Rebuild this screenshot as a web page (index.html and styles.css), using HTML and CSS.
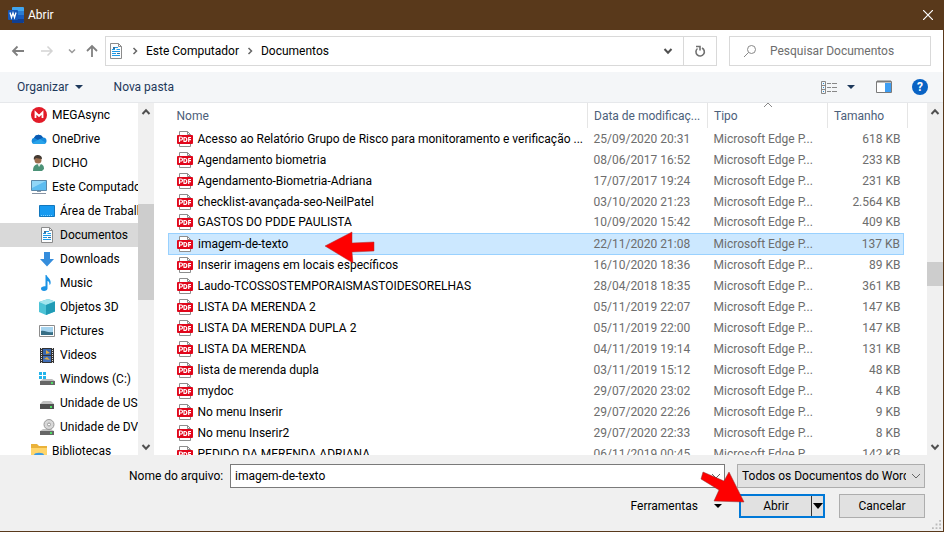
FILE: index.html
```html
<!DOCTYPE html>
<html lang="pt-BR">
 <head>
  <meta charset="utf-8">
  <title>Abrir</title>
  <link rel="stylesheet" href="styles.css">
 </head>
 <body>
  <svg class="defs" aria-hidden="true">
   <symbol id="doc" viewBox="0 0 16 16">
    <path d="M2.500.5h8l3 3v12h-11z" fill="#fcfdfe" stroke="#8b8b8b"/>
    <path d="M10.500.5v3h3" fill="none" stroke="#8b8b8b"/>
    <path d="M4 6.500h3M7 4.500h3M4 8.500h8M4 10.500h4M4 12.500h8M8.500 6.500h3.500" stroke="#1e9be8"/>
    <path d="M5 4h2v2H5zM9 10h3v1H9z" fill="#3f6f96"/>
   </symbol>
   <symbol id="pdf" viewBox="0 0 16 16">
    <path d="M2.500.5h8l3 3v12h-11z" fill="#fff" stroke="#8d8d8d"/>
    <path d="M10.500.5v3h3" fill="none" stroke="#8d8d8d"/>
    <rect y="4" width="16" height="9" rx="1" fill="#e1061b"/>
    <path d="M2.500 11V6h1.500a1.300 1.300 0 0 1 0 3H2.500M7 6.500h.8a2 2 0 0 1 0 4H7zM11.700 11V6.500H14M11.700 8.700H14" fill="none" stroke="#fff" stroke-width="1.200"/>
   </symbol>
   <symbol id="up" viewBox="0 0 10 10"><path d="M1.500 7L5 3.300 8.500 7" fill="none" stroke="#505050" stroke-width="2"/></symbol>
   <symbol id="down" viewBox="0 0 10 10"><path d="M1.500 3L5 6.700 8.500 3" fill="none" stroke="#505050" stroke-width="2"/></symbol>
   <symbol id="thin" viewBox="0 0 10 10"><path d="M1 3l4 4 4-4" fill="none" stroke="#666"/></symbol>
   <symbol id="next" viewBox="0 0 10 10"><path d="M3.500 2l3 3-3 3" fill="none" stroke="#666" stroke-width="1.500"/></symbol>
   <symbol id="caret" viewBox="0 0 10 10"><path d="M1 3h8L5 7z" fill="currentColor"/></symbol>
  </svg>

  <div class="window">
   <header class="title">
    <svg class="icon" viewBox="0 0 16 16">
     <rect x="4" width="12" height="16" rx="1" fill="#41a5ee"/>
     <path d="M4 4h12v4H4z" fill="#2b7cd3"/>
     <path d="M4 8h12v4H4z" fill="#185abd"/>
     <path d="M4 12h12v3a1 1 0 0 1-1 1H4z" fill="#103f91"/>
     <rect y="3" width="10" height="10" rx="1" fill="#1657b8"/>
     <path d="M2 5.500l1.500 5L5 6l1.500 4.500L8 5.500" fill="none" stroke="#fff" stroke-width="1.300"/>
    </svg>
    <h1>Abrir</h1>
    <button class="close" aria-label="Fechar"><svg viewBox="0 0 10 10"><path d="M0 0l10 10M10 0L0 10" stroke="#fff" stroke-width="1.200"/></svg></button>
   </header>

   <div class="nav">
    <div class="arrows">
     <button aria-label="Voltar"><svg class="icon" viewBox="0 0 16 16"><path d="M14 8H3M7.500 3.500L3 8l4.500 4.500" fill="none" stroke="#808080" stroke-width="1.800"/></svg></button>
     <button aria-label="Avançar" disabled><svg class="icon" viewBox="0 0 16 16"><path d="M2 8h11M8.500 3.500L13 8l-4.500 4.500" fill="none" stroke="#d4d4d4" stroke-width="1.500"/></svg></button>
     <button class="recent" aria-label="Locais recentes"><svg class="small" viewBox="0 0 10 10"><path d="M2 3.500l3 3 3-3" fill="none" stroke="#999" stroke-width="1.500"/></svg></button>
     <button aria-label="Acima"><svg class="icon" viewBox="0 0 16 16"><path d="M8 14V3M3 8l5-5 5 5" fill="none" stroke="#808080" stroke-width="1.800"/></svg></button>
    </div>
    <div class="address">
     <svg class="icon"><use href="#doc"/></svg>
     <svg class="small"><use href="#next"/></svg>
     <a href="#">Este Computador</a>
     <svg class="small"><use href="#next"/></svg>
     <a href="#">Documentos</a>
     <button class="history" aria-label="Locais anteriores"><svg class="small"><use href="#down"/></svg></button>
     <button class="refresh" aria-label="Atualizar"><svg viewBox="0 0 14 14"><path d="M9 4A4.200 4.200 0 1 1 4.500 4.500M3 2.500h4v4" fill="none" stroke="#707070" stroke-width="1.600"/></svg></button>
    </div>
    <label class="search">
     <svg viewBox="0 0 14 14"><circle cx="8.500" cy="5.500" r="4" fill="none" stroke="#888"/><path d="M5.500 8.500L1 13" stroke="#888"/></svg>
     <input type="search" placeholder="Pesquisar Documentos" aria-label="Pesquisar Documentos">
    </label>
   </div>

   <div class="toolbar">
    <button>Organizar <svg class="small"><use href="#caret"/></svg></button>
    <button>Nova pasta</button>
    <div class="views">
     <button aria-label="Alterar modo de exibição">
      <svg class="icon" viewBox="0 0 16 16"><path d="M.5 2.500h4v12h-4zM.5 6.500h4M.5 10.500h4" fill="none" stroke="#888"/><path d="M2 4.500h1M2 8.500h1M2 12.500h1" stroke="#2d8fd5"/><path d="M6 4.500h4M11 4.500h5M6 8.500h4M11 8.500h5M6 12.500h4M11 12.500h5" stroke="#888"/></svg>
      <svg class="small"><use href="#caret"/></svg>
     </button>
     <button aria-label="Painel de visualização"><svg class="icon" viewBox="0 0 16 16"><path d="M.5 2.500h15v11H.5z" fill="#fff" stroke="#7a7a7a"/><path d="M1 2.500h14" stroke="#7a7a7a" stroke-width="2"/><path d="M9 4h6v9H9z" fill="#3d9df2"/></svg></button>
     <button class="help" aria-label="Ajuda">?</button>
    </div>
   </div>

   <main class="content">
    <nav class="tree">
     <a href="#"><svg class="icon" viewBox="0 0 16 16"><circle cx="8" cy="8" r="8" fill="#e21b28"/><path d="M4.500 11V5.500L8 9l3.500-3.500V11" fill="none" stroke="#fff" stroke-width="1.800"/></svg>MEGAsync</a>
     <a href="#"><svg class="icon" viewBox="0 0 16 16"><path d="M3 13a3.200 3.200 0 0 1 0-6.200A5 5 0 0 1 12 6.500a3.300 3.300 0 0 1 1 6.500z" fill="#1689dc"/><path d="M3 6.800A5 5 0 0 1 12 6.500L7 9z" fill="#0a5ab2"/><path d="M1 12l8-4 6 4-2 1H3z" fill="#28a3ea"/></svg>OneDrive</a>
     <a href="#"><svg class="icon" viewBox="0 0 16 16"><path d="M2 16c0-5 2-7 6-7s5 2 5 5l-2 2z" fill="#4b9277"/><path d="M6.500 9L8 12l2-3z" fill="#e5eee9"/><circle cx="7" cy="5" r="3.500" fill="#9b6d4e"/><path d="M3 5c-1-4 2-5 4-5s4 1 4 4c-2 0-5-1-6-1z" fill="#433a32"/></svg>DICHO</a>
     <a href="#"><svg class="icon" viewBox="0 0 16 16"><path d="M.5 1.500h15v10H.5z" fill="#5dbcf0" stroke="#5b87a8"/><path d="M1 2h14L1 9z" fill="#91d6f7"/><path d="M6 12h4v1H6z" fill="#89a"/><path d="M1 14.500h14" stroke="#8793a3"/></svg>Este Computador</a>
     <a class="sub" href="#"><svg class="icon" viewBox="0 0 16 16"><path d="M.5 2.500h15v11H.5z" fill="#179af0" stroke="#1277bd"/><path d="M2 12.500h12" stroke="#7fd0ff" stroke-dasharray="1 1"/></svg>Área de Trabalho</a>
     <a class="sub active" href="#"><svg class="icon"><use href="#doc"/></svg>Documentos</a>
     <a class="sub" href="#"><svg class="icon" viewBox="0 0 16 16"><path d="M5 1h6v7h4l-7 7.500L1 8h4z" fill="#358ddc"/></svg>Downloads</a>
     <a class="sub" href="#"><svg class="icon" viewBox="0 0 16 16"><path d="M7.500 0c1 3 5 4 4 9l-1 1c0-3-1-4-2-4v7.500c0 1.500-1.500 2.500-3.500 2.500S2 15 2 13.500 4 11 6.500 11.300V0z" fill="#1b93e5"/></svg>Music</a>
     <a class="sub" href="#"><svg class="icon" viewBox="0 0 16 16"><path d="M0 3l9-3 7 2.500v10L7 16l-7-3z" fill="#4cc3d6"/><path d="M0 3l9-3 7 2.500L7 6z" fill="#a2e5ee"/><path d="M7 6l9-3.500v10L7 16z" fill="#209bb5"/></svg>Objetos 3D</a>
     <a class="sub" href="#"><svg class="icon" viewBox="0 0 16 16"><path d="M.5 2.500h15v11H.5z" fill="#fff" stroke="#8c8c8c"/><path d="M2 4h12v8H2z" fill="#a6d4ef"/><path d="M2 8c4-1 6 2 12 1v3H2z" fill="#376f86"/></svg>Pictures</a>
     <a class="sub" href="#"><svg class="icon" viewBox="0 0 16 16"><path d="M1 1h14v15H1z" fill="#333"/><path d="M2.500 1v15M13.500 1v15" stroke="#ddd" stroke-dasharray="1 1"/><path d="M4 2h8v6H4z" fill="#3866ad"/><path d="M4 9h8v6H4z" fill="#426fb8"/><path d="M7 3l4 3-4 1zM5 12l3-2 3 3z" fill="#dfab42"/></svg>Videos</a>
     <a class="sub" href="#"><svg class="icon" viewBox="0 0 16 16"><path d="M0 1h3v3H0zM4 1h3v3H4zM0 5h3v3H0zM4 5h3v3H4z" fill="#22b4eb"/><path d="M1 10l3-2h9l3 2z" fill="#bbb"/><path d="M1 10h15v4H1z" fill="#666"/><path d="M12 12h2" stroke="#4fdc64" stroke-width="2"/></svg>Windows (C:)</a>
     <a class="sub" href="#"><svg class="icon" viewBox="0 0 16 16"><path d="M1 9l3-3h8l3 3z" fill="#c2c2c2"/><path d="M1 9h14v5H1z" fill="#505050"/><path d="M11 12h2" stroke="#4fdc64" stroke-width="2"/></svg>Unidade de USB</a>
     <a class="sub" href="#"><svg class="icon" viewBox="0 0 16 16"><path d="M1 12l3-2h8l3 2z" fill="#c2c2c2"/><path d="M1 12h14v4H1z" fill="#666"/><path d="M11 14h2" stroke="#4fdc64" stroke-width="2"/><circle cx="10" cy="5.500" r="5" fill="#d8d8d8" stroke="#999"/><circle cx="10" cy="5.500" r="1.500" fill="#fff" stroke="#999"/></svg>Unidade de DVD</a>
     <a href="#"><svg class="icon" viewBox="0 0 16 16"><path d="M0 1h6l2 2h8v13H0z" fill="#eab23a"/><path d="M0 5h16v11H0z" fill="#ffd56b"/><path d="M3 16v-4c0-3 10-3 10 0v4z" fill="#3d9be2"/></svg>Bibliotecas</a>
    </nav>
    <div class="scroll tree-scroll">
     <button aria-label="Rolar para cima"><svg class="small"><use href="#up"/></svg></button>
     <div class="before"></div><div class="thumb"></div><div class="after"></div>
     <button aria-label="Rolar para baixo"><svg class="small"><use href="#down"/></svg></button>
    </div>

    <div class="files">
     <table>
      <colgroup><col><col class="date"><col class="type"><col class="size"><col class="edge"></colgroup>
      <thead>
       <tr><th>Nome</th><th>Data de modificaç...</th><th class="sorted">Tipo<svg class="small" viewBox="0 0 10 10"><path d="M1 7l4-4 4 4" fill="none" stroke="#888"/></svg></th><th colspan="2">Tamanho</th></tr>
      </thead>
      <tbody id="rows"></tbody>
     </table>
     <svg class="point-file" viewBox="0 0 52 34"><path d="M1 15L28 1v11l22-1v9l-22 1 1 11z" fill="#fe0000" stroke="#a33" stroke-width=".5"/></svg>
    </div>
    <div class="scroll file-scroll">
     <button aria-label="Rolar para cima"><svg class="small"><use href="#up"/></svg></button>
     <div class="before"></div><div class="thumb"></div><div class="after"></div>
     <button aria-label="Rolar para baixo"><svg class="small"><use href="#down"/></svg></button>
    </div>
   </main>

   <footer class="footer">
    <div class="line">
     <label for="name">Nome do arquivo:</label>
     <div class="combo"><input id="name" type="text" value="imagem-de-texto"><svg class="small"><use href="#thin"/></svg></div>
     <div class="filter"><select aria-label="Tipo de arquivo"><option>Todos os Documentos do Word</option></select><svg class="small"><use href="#thin"/></svg></div>
    </div>
    <div class="line actions">
     <button class="tools">Ferramentas <svg class="small"><use href="#caret"/></svg></button>
     <div class="open">
      <button>Abrir</button>
      <button class="more" aria-label="Mais opções"><svg viewBox="0 0 10 10"><path d="M0 2h10L5 8z"/></svg></button>
      <svg class="point-open" viewBox="0 0 46 34"><path d="M3 1l21 9 5-9 15 30-30-1 5-11L1 8z" fill="#fe0000" stroke="#833" stroke-width=".5"/></svg>
     </div>
     <button class="cancel">Cancelar</button>
    </div>
    <svg class="grip" viewBox="0 0 10 10"><path d="M8 0h2v2H8zM4 4h2v2H4zM8 4h2v2H8zM0 8h2v2H0zM4 8h2v2H4zM8 8h2v2H8z" fill="#bbb"/></svg>
   </footer>
  </div>

<script>
var files = [
	["Acesso ao Relatório Grupo de Risco para monitoramento e verificação ...", "25/09/2020 20:31", "618 KB"],
	["Agendamento biometria", "08/06/2017 16:52", "233 KB"],
	["Agendamento-Biometria-Adriana", "17/07/2017 19:24", "231 KB"],
	["checklist-avançada-seo-NeilPatel", "03/10/2020 21:23", "2.564 KB"],
	["GASTOS DO PDDE PAULISTA", "10/09/2020 15:42", "409 KB"],
	["imagem-de-texto", "22/11/2020 21:08", "137 KB"],
	["Inserir imagens em locais específicos", "16/10/2020 18:36", "89 KB"],
	["Laudo-TCOSSOSTEMPORAISMASTOIDESORELHAS", "28/04/2018 18:35", "361 KB"],
	["LISTA DA MERENDA 2", "05/11/2019 22:07", "147 KB"],
	["LISTA DA MERENDA DUPLA 2", "05/11/2019 22:00", "147 KB"],
	["LISTA DA MERENDA", "04/11/2019 19:14", "131 KB"],
	["lista de merenda dupla", "03/11/2019 15:12", "48 KB"],
	["mydoc", "29/07/2020 23:02", "4 KB"],
	["No menu Inserir", "29/07/2020 22:26", "9 KB"],
	["No menu Inserir2", "29/07/2020 22:33", "8 KB"],
	["PEDIDO DA MERENDA ADRIANA", "06/11/2019 00:45", "142 KB"]
];
var html = "";
for (var i = 0; i < files.length; i++) {
	html += '<tr' + (i == 5 ? ' class="selected"' : '') + '><td><svg class="icon"><use href="#pdf"/></svg>' + files[i][0] +
		'</td><td>' + files[i][1] + '</td><td>Microsoft Edge P...</td><td>' + files[i][2] + '</td></tr>';
}
document.getElementById("rows").innerHTML = html;
</script>
 </body>
</html>
```
FILE: styles.css
```css
* {
  box-sizing: border-box;
}
body {
  margin: 0;
  background: #fff;
  font-family: Roboto, "Open Sans", sans-serif;
  font-size: 12px;
  line-height: 16px;
  color: #000;
}
button, input, select {
  font: inherit;
  color: inherit;
  padding: 0;
  border: none;
  background: none;
}
button {
  display: flex;
  align-items: center;
  justify-content: center;
}
a {
  color: inherit;
  text-decoration: none;
}
.defs {
  position: absolute;
  width: 0;
  height: 0;
}
.icon {
  width: 16px;
  height: 16px;
  flex: none;
}
.small {
  width: 10px;
  height: 10px;
  flex: none;
}
.window {
  display: flex;
  flex-direction: column;
  height: calc(100vh - 1px);
  margin-right: 2px;
  border-right: 1px solid #59391b;
  border-bottom: 1px solid #59391b;
}

/* title bar */
.title {
  display: flex;
  align-items: center;
  height: 30px;
  padding: 0 10px 0 8px;
  gap: 4px;
  background: #59391b;
  color: #fff;
}
.title h1 {
  flex: 1;
  margin: 0;
  font-size: 12px;
  font-weight: normal;
}
.close svg {
  width: 10px;
  height: 10px;
}

/* address bar */
.nav {
  display: flex;
  align-items: center;
  height: 42px;
  padding-right: 12px;
}
.arrows {
  display: flex;
  width: 105px;
  padding-left: 10px;
  gap: 13px;
}
.arrows .recent {
  margin: 0 -6px 0 -1px;
}
.address, .search {
  display: flex;
  align-items: center;
  height: 30px;
  border: 1px solid #d9d9d9;
}
.address {
  flex: 1;
  gap: 6px;
  padding-left: 2px;
}
.history {
  margin-left: auto;
  width: 18px;
}
.refresh {
  width: 33px;
  height: 28px;
  border-left: 1px solid #d9d9d9;
}
.refresh svg, .search svg {
  width: 14px;
  height: 14px;
}
.search {
  width: 202px;
  margin-left: 12px;
  padding-left: 13px;
  gap: 13px;
}
.search input {
  flex: 1;
  min-width: 0;
  outline: none;
}
.search input::placeholder {
  color: #6d6d6d;
  opacity: 1;
}

/* toolbar */
.toolbar {
  display: flex;
  align-items: center;
  height: 31px;
  padding: 0 15px 0 17px;
  gap: 30px;
  background: #f4f6f8;
  border-bottom: 1px solid #e6e8eb;
  color: #1e395b;
}
.toolbar button {
  gap: 5px;
}
.views {
  display: flex;
  align-items: center;
  gap: 20px;
  margin-left: auto;
}
.views button {
  gap: 9px;
}
.toolbar .help {
  width: 16px;
  height: 16px;
  border-radius: 8px;
  background: #0963c4;
  color: #fff;
  font-weight: bold;
}

/* folder tree */
.content {
  display: flex;
  flex: 1;
  min-height: 0;
}
.tree {
  width: 138px;
  overflow: hidden;
}
.tree a {
  display: flex;
  align-items: center;
  height: 24px;
  padding-left: 31px;
  gap: 5px;
  white-space: nowrap;
}
.tree .sub {
  padding-left: 39px;
}
.tree .active {
  background: #d9d9d9;
}

/* scroll bars */
.scroll {
  display: flex;
  flex-direction: column;
  width: 16px;
  background: #f0f0f0;
}
.scroll button {
  height: 17px;
}
.scroll .thumb {
  background: #cdcdcd;
}
.tree-scroll .before {
  flex: 84;
}
.tree-scroll .after {
  flex: 138;
}
.tree-scroll .thumb {
  height: 96px;
}
.file-scroll .before {
  flex: 142;
}
.file-scroll .after {
  flex: 152;
}
.file-scroll .thumb {
  height: 24px;
}

/* file list */
.files {
  position: relative;
  flex: 1;
  min-width: 0;
  padding: 0 19px 0 14px;
  overflow: hidden;
}
table {
  width: 100%;
  table-layout: fixed;
  border-collapse: collapse;
}
.date, .type {
  width: 120px;
}
.size {
  width: 76px;
}
.edge {
  width: 4px;
}
th, td {
  padding: 0 6px;
  white-space: nowrap;
  overflow: hidden;
}
th {
  height: 25px;
  border-right: 1px solid #e5e5e5;
  font-weight: normal;
  text-align: left;
  color: #4c607a;
}
th:first-child {
  padding-left: 8px;
}
.sorted {
  position: relative;
}
.sorted svg {
  position: absolute;
  left: 55px;
  top: -3px;
}
td {
  height: 21px;
  color: #6d6d6d;
}
td:first-child {
  padding-left: 8px;
  color: #000;
}
td:last-child {
  padding-right: 3px;
  text-align: right;
}
td .icon {
  margin-right: 5px;
  vertical-align: top;
}
.selected td {
  background: #cce8ff;
  border-top: 1px solid #99d1ff;
  border-bottom: 1px solid #99d1ff;
}
.selected td:first-child {
  border-left: 1px solid #99d1ff;
}
.selected td:last-child {
  border-right: 1px solid #99d1ff;
}
.point-file {
  position: absolute;
  left: 170px;
  top: 128px;
  width: 52px;
  height: 34px;
}

/* footer */
.footer {
  position: relative;
  display: flex;
  flex-direction: column;
  gap: 6px;
  height: 76px;
  padding: 9px 18px 0 129px;
  background: #f0f0f0;
}
.line {
  display: flex;
  align-items: center;
}
.line label {
  width: 96px;
}
.combo, .filter {
  position: relative;
  height: 24px;
}
.combo {
  flex: 1;
  margin: 0 12px 0 5px;
}
.combo input {
  width: 100%;
  height: 24px;
  padding-left: 4px;
  border: 1px solid #7a7a7a;
  background: #fff;
}
.filter select {
  appearance: none;
  width: 188px;
  height: 24px;
  padding: 0 18px 0 4px;
  border: 1px solid #adadad;
  background: #e1e1e1;
}
.combo svg, .filter svg {
  position: absolute;
  right: 4px;
  top: 7px;
}
.actions {
  justify-content: flex-end;
  gap: 14px;
}
.tools {
  gap: 15px;
  margin-right: 2px;
}
.open {
  position: relative;
  display: flex;
  width: 86px;
  height: 24px;
  border: 2px solid #0078d7;
  background: #e1e1e1;
}
.open button:first-child {
  flex: 1;
}
.more {
  width: 12px;
  border-left: 1px solid #333;
}
.more svg {
  width: 10px;
  height: 10px;
}
.cancel {
  width: 86px;
  height: 24px;
  border: 1px solid #adadad;
  background: #e1e1e1;
}
.point-open {
  position: absolute;
  left: -41px;
  top: -25px;
  width: 46px;
  height: 34px;
}
.grip {
  position: absolute;
  right: 2px;
  bottom: 2px;
  width: 9px;
  height: 9px;
}
```
